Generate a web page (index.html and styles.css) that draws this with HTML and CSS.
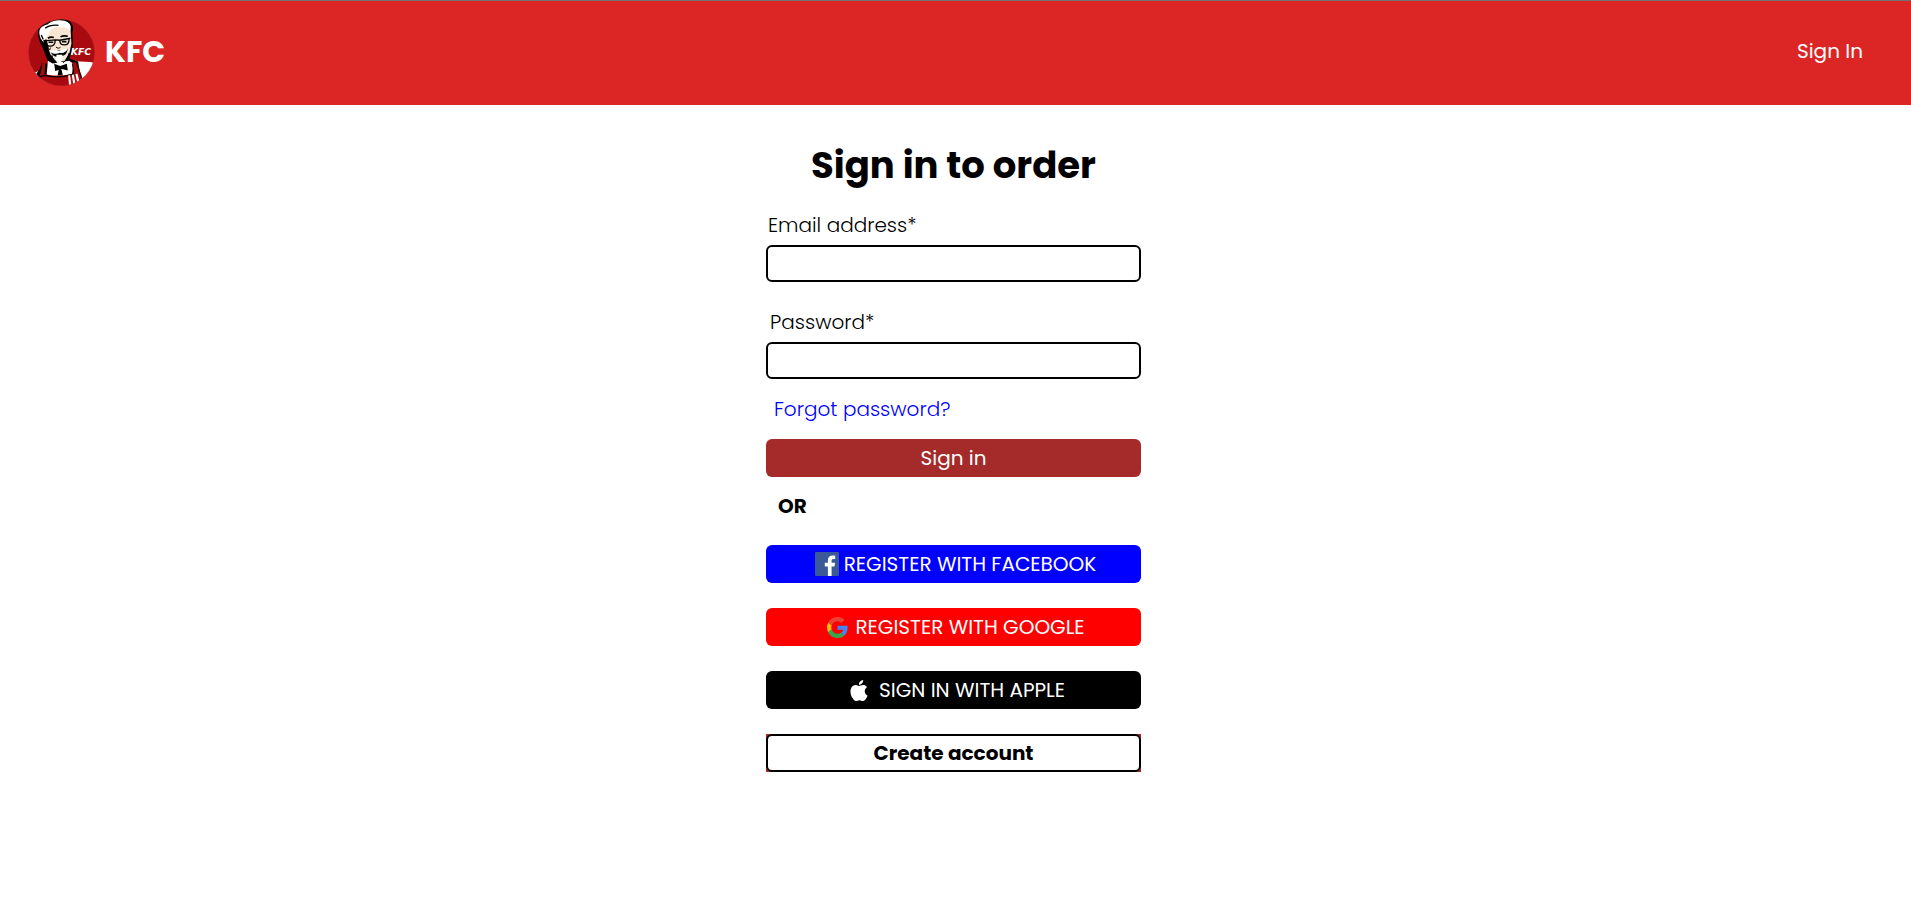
FILE: index.html
```html
<!DOCTYPE html>
<html lang="en">
<head>
<meta charset="utf-8">
<meta name="viewport" content="width=device-width, initial-scale=1">
<title>KFC</title>
<link rel="stylesheet" href="styles.css">
</head>
<body>
<header class="header">
  <a class="brand" href="#">
    <svg class="brand-logo" viewBox="24 26 202 202" aria-hidden="true">
      <clipPath id="disc"><circle cx="125" cy="127" r="100"/></clipPath>
      <g clip-path="url(#disc)">
        <path fill="#a80a10" d="M24 26h202v202H24z"/>
        <path fill="#fff" d="M166 152c20 4 42 2 62 6l-12 46-34 12-12-30zM38 190l34-14-4 28-24 4z"/>
        <path fill="#000" d="M54 62c2-12 14-20 24-24 14-12 58-16 70-6 12 8 14 22 10 34l1 40c-2 16-6 28-10 40l26 8 8 46-60 6H56l-14-4 28-42 16 0c-6-20-12-30-18-48-10-14-14-32-14-50z"/>
        <path fill="#fff" d="M84 152l14 8 50-8 14 10-6 32-44 8-32-6z"/>
        <path fill="#f8e6d2" d="M76 78l12-26 46-6 18 10 3 44-6 28-14 24-24 4-18-20-10-26z"/>
        <path fill="#fff" d="M58 66c0-16 14-20 26-24 12-14 48-16 60-6 11 7 10 18 7 26-8-10-18-12-30-11-14-3-26 2-31 11-2 8-6 12-10 18-4 8-5 14-4 20-12-8-18-22-18-34z"/>
        <path fill="none" stroke="#000" stroke-width="4" d="M76 54c10-8 26-10 40-9M64 74l6 14"/>
        <path fill="#000" d="M70 90l10-2 6 22 2 20 12 16 4 14-16-10c-8-18-16-36-18-60z"/>
        <path fill="none" stroke="#000" stroke-width="4" d="M72 92l34-3 14 1 32-6M76 94c0 12 4 14 14 14s16-4 16-18m14 0c0 12 4 14 14 14s14-6 14-18"/>
        <path fill="none" stroke="#000" stroke-width="5" d="M84 84c6-4 12-4 18-2m20-2c6-4 14-4 22-2M86 96h14m26-2h14"/>
        <path fill="none" stroke="#000" stroke-width="3" d="M108 110c4 5 10 5 14 1M92 112l-3 8"/>
        <path fill="#000" d="M93 126l15-6h20l16-4c-2 14-8 20-18 22l-16 2c-8-2-14-6-17-14z"/>
        <path fill="#fff" d="M90 124c8-2 14-6 22-4 6 2 8 2 14-1 8-2 12-2 18-3-4 10-14 14-24 12-10 5-22 4-30-4zM110 134h18c0 14-4 26-10 32-8-8-11-18-8-32z"/>
        <path fill="none" stroke="#000" stroke-width="3" d="M96 134c2 12 6 18 12 24m40-30c-4 14-8 22-18 30"/>
        <path fill="#000" d="M103 161l18 7 20-7 3 20-18-4-20 6zM117 178h8l4 18h-16z"/>
        <path fill="#a80a10" d="M40 206l18-6 8-40 10-2-2 34c32 8 62 4 88-2l-4-34 14 2 14 40 8 42H46z"/>
        <path fill="none" stroke="#000" stroke-width="4" d="M40 206l34-10c32 8 62 4 88-4"/>
        <path fill="none" stroke="#000" stroke-width="3" d="M58 200l8-40m92 0l4 32m8-34l16 48"/>
        <path fill="#fff" d="M145 196l6-1 4 32-7 2zM156 194l6-1 6 32-7 2zM167 192l6-1 7 26-7 4z"/>
        <text class="logo-text" x="153" y="136">KFC</text>
      </g>
      <circle cx="125" cy="127" r="100" fill="none" stroke="#a84040" stroke-width="1"/>
    </svg>
    <span class="brand-name">KFC</span>
  </a>
  <a class="nav-link" href="#">Sign In</a>
</header>
<main class="main">
  <form class="form">
    <h1 class="title">Sign in to order</h1>
    <label class="label" for="email">Email address*</label>
    <input class="field" id="email" type="email">
    <label class="label label-password" for="password">Password*</label>
    <input class="field" id="password" type="password">
    <a class="forgot" href="#">Forgot password?</a>
    <button class="btn btn-signin" type="submit">Sign in</button>
    <p class="or">OR</p>
    <div class="providers">
      <button class="btn btn-facebook" type="button">
        <svg class="icon-fb" viewBox="0 0 24 24" aria-hidden="true"><rect width="24" height="24" rx="1" fill="#3b5998"/><path fill="#fff" d="M12.900 24v-9.500H9.800v-3.700h3.100V8.400c0-3.200 1.800-4.900 4.700-4.900 1.200 0 2.100.1 2.600.2v3.300h-1.800c-1.500 0-1.800.8-1.800 1.800v2h3.400l-.5 3.700h-2.900V24z"/></svg>
        <span>REGISTER WITH FACEBOOK</span>
      </button>
      <button class="btn btn-google" type="button">
        <svg class="icon-google" viewBox="0 0 48 48" aria-hidden="true"><path fill="#ea4335" d="M24 9.500c3.540 0 6.710 1.220 9.210 3.600l6.850-6.850C35.900 2.380 30.470 0 24 0 14.620 0 6.510 5.380 2.560 13.220l7.980 6.190C12.430 13.720 17.740 9.500 24 9.500z"/><path fill="#4285f4" d="M46.980 24.550c0-1.570-.15-3.090-.38-4.550H24v9.020h12.940c-.58 2.960-2.260 5.480-4.780 7.180l7.730 6c4.510-4.180 7.090-10.360 7.090-17.650z"/><path fill="#fbbc05" d="M10.530 28.590c-.48-1.450-.76-2.990-.76-4.590s.27-3.140.76-4.590l-7.980-6.190C.92 16.460 0 20.120 0 24s.92 7.540 2.560 10.780z"/><path fill="#34a853" d="M24 48c6.480 0 11.930-2.130 15.890-5.810l-7.730-6c-2.150 1.450-4.920 2.300-8.160 2.300-6.260 0-11.570-4.220-13.470-9.910l-7.980 6.190C6.510 42.620 14.620 48 24 48z"/></svg>
        <span>REGISTER WITH GOOGLE</span>
      </button>
      <button class="btn btn-apple" type="button">
        <svg class="icon-apple" viewBox="2 0 20 24" aria-hidden="true"><path fill="#fff" d="M12.152 6.896c-.948 0-2.415-1.078-3.960-1.040-2.040.027-3.910 1.183-4.961 3.014-2.117 3.675-.546 9.103 1.519 12.090 1.013 1.454 2.208 3.090 3.792 3.039 1.520-.065 2.090-.987 3.935-.987 1.831 0 2.350.987 3.960.948 1.637-.026 2.676-1.480 3.676-2.948 1.156-1.688 1.636-3.325 1.662-3.415-.039-.013-3.182-1.221-3.220-4.857-.026-3.040 2.480-4.494 2.597-4.559-1.429-2.090-3.623-2.324-4.390-2.376-2-.156-3.675 1.090-4.610 1.090zM15.530 3.830c.843-1.012 1.400-2.427 1.245-3.830-1.207.052-2.662.805-3.532 1.818-.780.896-1.454 2.338-1.273 3.714 1.338.104 2.715-.688 3.559-1.701"/></svg>
        <span>SIGN IN WITH APPLE</span>
      </button>
      <div class="create-wrap">
        <button class="btn btn-create" type="button">Create account</button>
      </div>
    </div>
  </form>
</main>
</body>
</html>
```
FILE: styles.css
```css
* { box-sizing: border-box; }
body {
  margin: 0;
  background: #fff;
  color: #000;
  font-family: Poppins, Inter, "Open Sans", sans-serif;
  font-size: 20px;
  line-height: 30px;
}
a { text-decoration: none; }
.header {
  display: flex;
  align-items: center;
  justify-content: space-between;
  padding: 18px 48px 19px 28px;
  border-top: 1px solid #737373;
  background: #dc2626;
}
.brand { display: flex; align-items: center; gap: 10px; color: #fff; }
.brand-logo { width: 67px; height: 67px; }
.logo-text { font: italic 700 28px "DejaVu Sans", sans-serif; fill: #fff; }
.brand-name { padding-bottom: 2px; font-size: 30px; font-weight: 700; }
.nav-link { padding-bottom: 4px; color: #fff; }
.main { display: flex; justify-content: center; padding: 35px 4px 32px 0; }
.form { display: flex; flex-direction: column; width: 100%; max-width: 375px; }
.title { margin: 0 0 20px; font-size: 37px; line-height: 50px; font-weight: 700; text-align: center; }
.label { padding-left: 2px; margin-bottom: 5px; font-weight: 300; }
.label-password { padding-left: 4px; margin-top: 25px; }
.field {
  width: 100%;
  height: 37px;
  padding: 0 8px;
  border: 2px solid #000;
  border-radius: 6px;
  background: #fff;
  font: inherit;
}
.forgot { padding: 15px 8px; color: #00f; font-weight: 300; }
.btn {
  display: flex;
  align-items: center;
  justify-content: center;
  width: 100%;
  height: 38px;
  padding: 0;
  border: 0;
  border-radius: 6px;
  color: #fff;
  font: inherit;
}
.btn-signin { background: #a52a2a; }
.or { margin: 14px 0 24px; padding-left: 12px; font-weight: 700; }
.providers { display: flex; flex-direction: column; gap: 25px; }
.btn-facebook { gap: 5px; padding-left: 4px; background: #00f; }
.btn-google { gap: 7px; padding-left: 5px; background: #f00; }
.btn-apple { gap: 11px; padding-left: 8px; background: #000; }
.icon-fb { width: 24px; height: 24px; }
.icon-google { width: 21px; height: 21px; }
.icon-apple { width: 18px; height: 21px; }
.create-wrap { background: #a52a2a; }
.btn-create { border: 2px solid #000; background: #fff; color: #000; font-weight: 700; }
```
